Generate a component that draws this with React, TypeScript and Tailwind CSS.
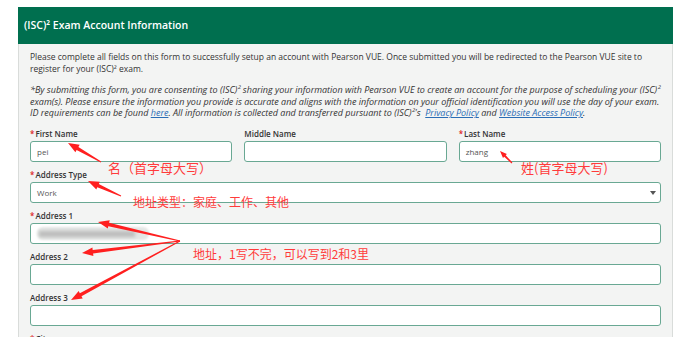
const font = { fontFamily: '"Open Sans", "Liberation Sans", sans-serif' };
const cjk = { fontFamily: '"Noto Sans CJK SC", "Open Sans", sans-serif' };

type Pt = [number, number];

function arrowPoints(tail: Pt, tip: Pt, neck = 3.6, headLen = 11, headW = 8.5) {
  const [x1, y1] = tail;
  const [x2, y2] = tip;
  const dx = x2 - x1;
  const dy = y2 - y1;
  const len = Math.hypot(dx, dy);
  const ux = dx / len;
  const uy = dy / len;
  const nx = -uy;
  const ny = ux;
  const bx = x2 - ux * headLen;
  const by = y2 - uy * headLen;
  const pts: Pt[] = [
    [x1 + nx * 0.5, y1 + ny * 0.5],
    [bx + (nx * neck) / 2, by + (ny * neck) / 2],
    [bx + (nx * headW) / 2, by + (ny * headW) / 2],
    [x2, y2],
    [bx - (nx * headW) / 2, by - (ny * headW) / 2],
    [bx - (nx * neck) / 2, by - (ny * neck) / 2],
    [x1 - nx * 0.5, y1 - ny * 0.5],
  ];
  return pts.map((p) => `${p[0].toFixed(1)},${p[1].toFixed(1)}`).join(" ");
}

const arrows: { tail: Pt; tip: Pt; small?: boolean }[] = [
  { tail: [101, 162], tip: [68, 143] },
  { tail: [512, 163], tip: [500, 151], small: true },
  { tail: [121, 196], tip: [88, 181] },
  { tail: [180, 241], tip: [98, 222] },
  { tail: [180, 241], tip: [82, 253] },
  { tail: [180, 241], tip: [71, 300] },
];

const notes = [
  { text: "名（首字母大写）", cls: "left-[108px] top-[159px] text-[13px]" },
  { text: "姓(首字母大写)", cls: "left-[521px] top-[159px] text-[13px]" },
  { text: "地址类型：家庭、工作、其他", cls: "left-[133px] top-[193px] text-[12px]" },
  { text: "地址，1写不完，可以写到2和3里", cls: "left-[193px] top-[245px] text-[12px]" },
];

function Label({ text, req }: { text: string; req?: boolean }) {
  return (
    <div className="h-[12px] leading-[12px] text-[8px] font-semibold text-[#333] mb-[1px] whitespace-nowrap">
      {req && <span className="text-[#d22] mr-[1px]">*</span>}
      {text}
    </div>
  );
}

function Input({ value, children }: { value?: string; children?: React.ReactNode }) {
  return (
    <div className="relative h-[21px] bg-white border border-[#69a893] rounded-[3px] flex items-center px-[6px] text-[8px] text-[#555]">
      {value}
      {children}
    </div>
  );
}

export default function App() {
  return (
    <div className="relative w-[676px] h-[337px] overflow-hidden bg-white pt-[7px] pl-[18px]" style={font}>
      <div className="w-[655px] border border-[#d9dcda] bg-[#f3f4f3]">
        {/* Header */}
        <div className="h-[37px] bg-[#006f4f] flex items-center pl-[6px] -mx-px -mt-px">
          <h1 className="text-white text-[10.5px] font-semibold">(ISC)² Exam Account Information</h1>
        </div>

        {/* Body */}
        <div className="px-[11px] pt-[7px] text-[8.5px] text-[#333] leading-[12px]">
          <p className="whitespace-nowrap">
            Please complete all fields on this form to successfully setup an account with Pearson VUE. Once submitted you will be redirected to the Pearson VUE site to
            <br />
            register for your (ISC)² exam.
          </p>
          <p className="italic text-[9px] mt-[9px] leading-[11.7px] whitespace-nowrap">
            *By submitting this form, you are consenting to (ISC)² sharing your information with Pearson VUE to create an account for the purpose of scheduling your (ISC)²
            <br />
            exam(s). Please ensure the information you provide is accurate and aligns with the information on your official identification you will use the day of your exam.
            <br />
            ID requirements can be found <span className="text-[#2a6db5] underline">here</span>. All information is collected and transferred pursuant to (ISC)²'s&nbsp;{" "}
            <span className="text-[#2a6db5] underline">Privacy Policy</span> and{" "}
            <span className="text-[#2a6db5] underline">Website Access Policy</span>.
          </p>

          {/* Form */}
          <div className="mt-[9px] flex flex-col gap-[7px] pb-[12px]">
            <div className="grid grid-cols-3 gap-x-[12px]">
              <div>
                <Label text="First Name" req />
                <Input value="pei" />
              </div>
              <div>
                <Label text="Middle Name" />
                <Input />
              </div>
              <div>
                <Label text="Last Name" req />
                <Input value="zhang" />
              </div>
            </div>
            <div>
              <Label text="Address Type" req />
              <Input value="Work">
                <span className="absolute right-[4px] top-[8px] w-0 h-0 border-l-[3px] border-r-[3px] border-t-[4px] border-l-transparent border-r-transparent border-t-[#555]" />
              </Input>
            </div>
            <div>
              <Label text="Address 1" req />
              <Input>
                <div className="relative w-[112px] h-[13px] rounded-[6px] bg-[#e3e6e4] blur-[1px] flex items-center px-[2px]">
                  <div className="w-[96px] h-[6px] bg-[#bcbcbc] blur-[1.5px]" />
                </div>
              </Input>
            </div>
            <div>
              <Label text="Address 2" />
              <Input />
            </div>
            <div>
              <Label text="Address 3" />
              <Input />
            </div>
            <div>
              <Label text="City" req />
              <Input />
            </div>
          </div>
        </div>
      </div>

      {/* Annotations */}
      <svg className="absolute inset-0 pointer-events-none" width={676} height={337}>
        {arrows.map((a, i) => (
          <polygon
            key={i}
            points={a.small ? arrowPoints(a.tail, a.tip, 2, 7, 5.5) : arrowPoints(a.tail, a.tip)}
            fill="#ff1f1f"
          />
        ))}
      </svg>
      {notes.map((n) => (
        <div key={n.text} className={`absolute leading-[18px] text-[#ff3b3b] whitespace-nowrap ${n.cls}`} style={cjk}>
          {n.text}
        </div>
      ))}
    </div>
  );
}
